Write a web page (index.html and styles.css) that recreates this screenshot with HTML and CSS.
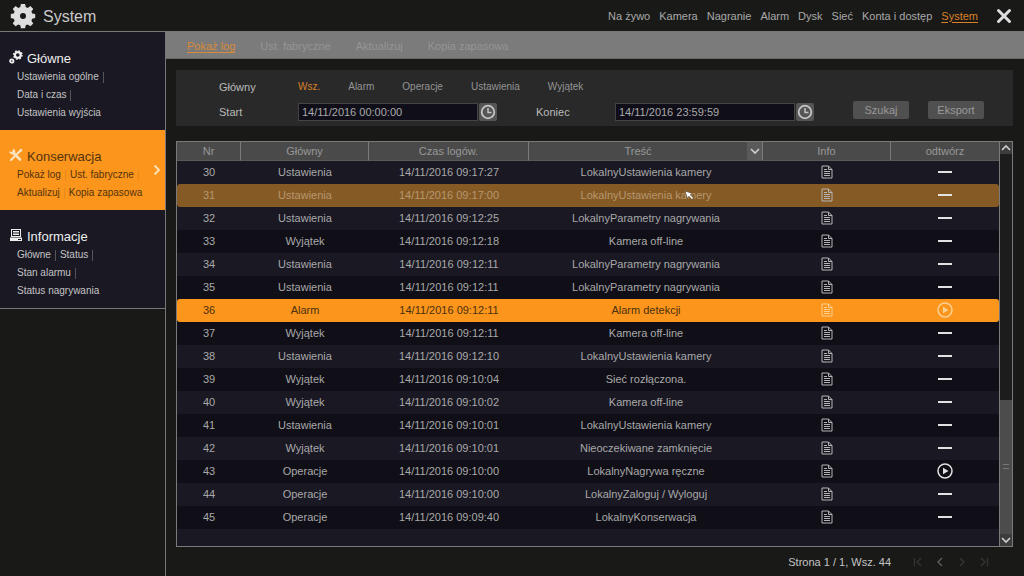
FILE: index.html
```html
<!DOCTYPE html>
<html lang="pl">
<head>
<meta charset="utf-8">
<title>System</title>
<link rel="stylesheet" href="styles.css">
</head>
<body>
<svg class="defs" aria-hidden="true">
  <symbol id="gear" viewBox="0 0 26 26">
    <path fill-rule="evenodd" d="M10.900 1h4.200l.6 3.100 2 .8L20.400 3l2.900 2.900-1.900 2.700.8 2 3 .5v4l-3 .6-.8 2 1.900 2.700-2.900 2.900-2.700-1.900-2 .8-.6 3h-4.200l-.6-3-2-.8-2.700 1.900-2.900-2.900 1.900-2.700-.8-2-3-.6v-4l3-.5.8-2-1.900-2.700L5.600 3l2.700 1.900 2-.8zM13 10a3 3 0 1 0 0 6 3 3 0 0 0 0-6z"/>
  </symbol>
  <symbol id="doc" viewBox="0 0 12 14">
    <path d="M1 1h6.500l3.500 3.500V13H1zM7.500 1v3.500H11M3 4.500h3M3 6.500h6M3 8.500h6M3 10.500h6" fill="none" stroke="currentColor"/>
  </symbol>
  <symbol id="dash" viewBox="0 0 16 16"><path d="M1 8h14" stroke="currentColor" stroke-width="2"/></symbol>
  <symbol id="play" viewBox="0 0 16 16">
    <circle cx="8" cy="8" r="7" fill="none" stroke="currentColor" stroke-width="1.500"/><path d="M6 4.700v6.600L11.500 8z" fill="currentColor"/>
  </symbol>
  <symbol id="clock" viewBox="0 0 18 18">
    <circle cx="9" cy="9" r="6.300" fill="none" stroke="currentColor" stroke-width="1.800"/><path d="M9 5v4.500h3.500" fill="none" stroke="currentColor" stroke-width="1.500"/>
  </symbol>
  <symbol id="down" viewBox="0 0 12 12"><path d="M2 4l4 4 4-4" fill="none" stroke="currentColor" stroke-width="1.700"/></symbol>
  <symbol id="up" viewBox="0 0 12 12"><path d="M2 8l4-4 4 4" fill="none" stroke="currentColor" stroke-width="1.700"/></symbol>
</svg>

<header class="topbar">
  <svg class="logo"><use href="#gear"/></svg>
  <h1>System</h1>
  <nav class="topnav">
    <a href="#">Na żywo</a><a href="#">Kamera</a><a href="#">Nagranie</a><a href="#">Alarm</a><a href="#">Dysk</a><a href="#">Sieć</a><a href="#">Konta i dostęp</a><a href="#" class="current">System</a>
  </nav>
  <button class="close" aria-label="Zamknij"><svg viewBox="0 0 16 16"><path d="M2.500 2.500l11 11M13.500 2.500l-11 11" stroke="currentColor" stroke-width="3" stroke-linecap="round"/></svg></button>
</header>

<div class="layout">
  <aside class="sidebar">
    <section class="group">
      <h2><svg viewBox="0 0 14 14"><circle cx="8.800" cy="5" r="2.900" fill="none" stroke="currentColor" stroke-width="2.200"/><circle cx="8.800" cy="5" r="4.200" fill="none" stroke="currentColor" stroke-width="1.400" stroke-dasharray="1.650 1.650"/><circle cx="2.800" cy="11" r="1.700" fill="none" stroke="currentColor" stroke-width="1.800"/></svg>Główne</h2>
      <p><a href="#">Ustawienia ogólne</a><i></i></p>
      <p><a href="#">Data i czas</a><i></i></p>
      <p><a href="#">Ustawienia wyjścia</a></p>
    </section>
    <section class="group active">
      <h2><svg viewBox="0 0 14 14"><path d="M4 4.500l7 7" fill="none" stroke="currentColor" stroke-width="2.600" stroke-linecap="round"/><path d="M2 12l9-9" fill="none" stroke="currentColor" stroke-width="2.200" stroke-linecap="round"/><path d="M0 3l2 1.200L4 3 3.600.800C6 1 7 3.500 6 5.500 4 7.500 0 6 0 3zM10 2l2.500-1.500L13.500 2 12 4.500z"/></svg>Konserwacja</h2>
      <p><a href="#">Pokaż log</a><i></i><a href="#">Ust. fabryczne</a><i></i></p>
      <p><a href="#">Aktualizuj</a><i></i><a href="#">Kopia zapasowa</a></p>
      <svg class="arrow" viewBox="0 0 8 12"><path d="M1.500 1.500L6 6l-4.500 4.500" fill="none" stroke="currentColor" stroke-width="1.800"/></svg>
    </section>
    <section class="group last">
      <h2><svg viewBox="0 0 14 14"><path fill-rule="evenodd" d="M2 1h10v8H2zM3 2v6h8V2zM1 9.500h12V13H1zM9 11v1h3v-1z"/><path d="M4 3.500h6M4 5h6M4 6.500h6" stroke="currentColor"/></svg>Informacje</h2>
      <p><a href="#">Główne</a><i></i><a href="#">Status</a><i></i></p>
      <p><a href="#">Stan alarmu</a><i></i></p>
      <p><a href="#">Status nagrywania</a></p>
    </section>
  </aside>

  <main class="content">
    <nav class="tabs"><a href="#" class="current">Pokaż log</a><a href="#">Ust. fabryczne</a><a href="#">Aktualizuj</a><a href="#">Kopia zapasowa</a></nav>

    <form class="filters">
      <div class="filter-row">
        <span class="label">Główny</span>
        <div class="kinds"><button type="button" class="on">Wsz.</button><button type="button">Alarm</button><button type="button">Operacje</button><button type="button">Ustawienia</button><button type="button">Wyjątek</button></div>
      </div>
      <div class="filter-row">
        <label class="label" for="start">Start</label>
        <div class="field"><input id="start" value="14/11/2016 00:00:00"><button type="button" aria-label="Wybierz start"><svg><use href="#clock"/></svg></button></div>
        <label class="label" for="end">Koniec</label>
        <div class="field"><input id="end" value="14/11/2016 23:59:59"><button type="button" aria-label="Wybierz koniec"><svg><use href="#clock"/></svg></button></div>
        <div class="actions"><button type="button">Szukaj</button><button type="button">Eksport</button></div>
      </div>
    </form>

    <div class="log">
      <table>
        <colgroup><col class="c-nr"><col class="c-kind"><col class="c-time"><col class="c-text"><col class="c-info"><col class="c-play"></colgroup>
        <thead><tr><th>Nr</th><th>Główny</th><th>Czas logów.</th><th><div class="sortable"><span>Treść</span><button aria-label="Filtruj treść"><svg><use href="#down"/></svg></button></div></th><th>Info</th><th>odtwórz</th></tr></thead>
        <tbody>
          <tr><td>30</td><td>Ustawienia</td><td>14/11/2016 09:17:27</td><td>LokalnyUstawienia kamery</td><td><svg class="doc"><use href="#doc"/></svg></td><td><svg class="act"><use href="#dash"/></svg></td></tr>
          <tr class="hover"><td>31</td><td>Ustawienia</td><td>14/11/2016 09:17:00</td><td><span class="pointed">LokalnyUstawienia kamery<svg class="cursor" viewBox="0 0 9 9"><path d="M0 0l7.500 2.500-2.300 1.300L8.500 7 7 8.500 3.800 5.200 2.500 7.500z" fill="#fff" stroke="#3a2a18" stroke-width=".5"/></svg></span></td><td><svg class="doc"><use href="#doc"/></svg></td><td><svg class="act"><use href="#dash"/></svg></td></tr>
          <tr><td>32</td><td>Ustawienia</td><td>14/11/2016 09:12:25</td><td>LokalnyParametry nagrywania</td><td><svg class="doc"><use href="#doc"/></svg></td><td><svg class="act"><use href="#dash"/></svg></td></tr>
          <tr><td>33</td><td>Wyjątek</td><td>14/11/2016 09:12:18</td><td>Kamera off-line</td><td><svg class="doc"><use href="#doc"/></svg></td><td><svg class="act"><use href="#dash"/></svg></td></tr>
          <tr><td>34</td><td>Ustawienia</td><td>14/11/2016 09:12:11</td><td>LokalnyParametry nagrywania</td><td><svg class="doc"><use href="#doc"/></svg></td><td><svg class="act"><use href="#dash"/></svg></td></tr>
          <tr><td>35</td><td>Ustawienia</td><td>14/11/2016 09:12:11</td><td>LokalnyParametry nagrywania</td><td><svg class="doc"><use href="#doc"/></svg></td><td><svg class="act"><use href="#dash"/></svg></td></tr>
          <tr class="selected"><td>36</td><td>Alarm</td><td>14/11/2016 09:12:11</td><td>Alarm detekcji</td><td><svg class="doc"><use href="#doc"/></svg></td><td><svg class="act"><use href="#play"/></svg></td></tr>
          <tr><td>37</td><td>Wyjątek</td><td>14/11/2016 09:12:11</td><td>Kamera off-line</td><td><svg class="doc"><use href="#doc"/></svg></td><td><svg class="act"><use href="#dash"/></svg></td></tr>
          <tr><td>38</td><td>Ustawienia</td><td>14/11/2016 09:12:10</td><td>LokalnyUstawienia kamery</td><td><svg class="doc"><use href="#doc"/></svg></td><td><svg class="act"><use href="#dash"/></svg></td></tr>
          <tr><td>39</td><td>Wyjątek</td><td>14/11/2016 09:10:04</td><td>Sieć rozłączona.</td><td><svg class="doc"><use href="#doc"/></svg></td><td><svg class="act"><use href="#dash"/></svg></td></tr>
          <tr><td>40</td><td>Wyjątek</td><td>14/11/2016 09:10:02</td><td>Kamera off-line</td><td><svg class="doc"><use href="#doc"/></svg></td><td><svg class="act"><use href="#dash"/></svg></td></tr>
          <tr><td>41</td><td>Ustawienia</td><td>14/11/2016 09:10:01</td><td>LokalnyUstawienia kamery</td><td><svg class="doc"><use href="#doc"/></svg></td><td><svg class="act"><use href="#dash"/></svg></td></tr>
          <tr><td>42</td><td>Wyjątek</td><td>14/11/2016 09:10:01</td><td>Nieoczekiwane zamknięcie</td><td><svg class="doc"><use href="#doc"/></svg></td><td><svg class="act"><use href="#dash"/></svg></td></tr>
          <tr><td>43</td><td>Operacje</td><td>14/11/2016 09:10:00</td><td>LokalnyNagrywa ręczne</td><td><svg class="doc"><use href="#doc"/></svg></td><td><svg class="act"><use href="#play"/></svg></td></tr>
          <tr><td>44</td><td>Operacje</td><td>14/11/2016 09:10:00</td><td>LokalnyZaloguj / Wyloguj</td><td><svg class="doc"><use href="#doc"/></svg></td><td><svg class="act"><use href="#dash"/></svg></td></tr>
          <tr><td>45</td><td>Operacje</td><td>14/11/2016 09:09:40</td><td>LokalnyKonserwacja</td><td><svg class="doc"><use href="#doc"/></svg></td><td><svg class="act"><use href="#dash"/></svg></td></tr>
        </tbody>
      </table>
      <div class="scroll">
        <button aria-label="Przewiń w górę"><svg><use href="#up"/></svg></button>
        <div class="track"></div>
        <div class="thumb"><span></span></div>
        <button aria-label="Przewiń w dół"><svg><use href="#down"/></svg></button>
      </div>
    </div>

    <footer class="pager">
      <span>Strona 1 / 1, Wsz. 44</span>
      <button aria-label="Pierwsza"><svg viewBox="0 0 10 10"><path d="M1.500 1v8M8 1L4 5l4 4"/></svg></button>
      <button class="lit" aria-label="Poprzednia"><svg viewBox="0 0 10 10"><path d="M7 1L3 5l4 4"/></svg></button>
      <button aria-label="Następna"><svg viewBox="0 0 10 10"><path d="M3 1l4 4-4 4"/></svg></button>
      <button aria-label="Ostatnia"><svg viewBox="0 0 10 10"><path d="M2 1l4 4-4 4M8.500 1v8"/></svg></button>
    </footer>
  </main>
</div>
</body>
</html>
```
FILE: styles.css
```css
* { box-sizing: border-box; }
body {
  margin: 0;
  min-height: 100vh;
  display: flex;
  flex-direction: column;
  background: #191918;
  color: #a9a9a9;
  font: 11px/18px "Liberation Sans", Arial, sans-serif;
}
h1, h2, p { margin: 0; font-weight: normal; }
a { color: inherit; text-decoration: none; }
button, input { font: inherit; color: inherit; border: 0; padding: 0; margin: 0; background: none; }
svg { display: block; fill: currentColor; }
.defs { position: absolute; width: 0; height: 0; }

.topbar {
  height: 32px;
  display: flex;
  align-items: center;
  padding: 0 12px 0 10px;
  border-bottom: 1px solid #777;
}
.logo { width: 26px; height: 26px; color: #dedede; }
.topbar h1 { flex: 1; margin-left: 7px; padding-top: 2px; font-size: 16px; color: #c9c9c9; }
.topnav { display: flex; gap: 9px; }
.current { color: #d98027; text-decoration: underline; text-underline-offset: 2px; }
.close { width: 16px; height: 16px; margin-left: 18px; color: #dedede; }

.layout { flex: 1; display: flex; }
.sidebar { width: 166px; flex: none; border-right: 1px solid #777; }
.group {
  position: relative;
  padding: 18px 8px 8px 17px;
  background: #191823;
  color: #c4c4c4;
  font-size: 10px;
  white-space: nowrap;
}
.group h2 { display: flex; align-items: center; gap: 4px; margin-left: -8px; font-size: 13px; color: #eee; }
.group h2 svg { width: 14px; height: 14px; margin-bottom: 4px; }
.group p { display: flex; align-items: center; }
.group i { width: 1px; height: 11px; margin: 0 4px; background: #55545c; }
.active { background: #fb951b; color: #53330f; }
.active h2 { color: #53330f; }
.active h2 svg, .arrow { color: #fbe3bd; }
.active i { background: #e58c20; }
.arrow { position: absolute; right: 4px; top: 34px; width: 8px; height: 12px; }
.last { border-bottom: 1px solid #777; }

.content { flex: 1; min-width: 0; display: flex; flex-direction: column; }
.tabs {
  display: flex;
  gap: 25px;
  height: 27px;
  padding: 5px 21px;
  background: #7b7b7b;
  color: #959595;
  border-bottom: 1px solid #666;
}
.tabs .current { color: #d98a38; }

.filters {
  margin: 11px 11px 0 10px;
  padding: 6px 29px 5px 43px;
  display: flex;
  flex-direction: column;
  gap: 5px;
  background: #292929;
}
.filter-row { display: flex; height: 20px; align-items: flex-end; }
.label { width: 79px; flex: none; color: #bababa; }
.kinds { display: flex; gap: 28px; font-size: 10px; color: #949494; }
.kinds .on { color: #d98027; }
.field { flex: 0 1 199px; min-width: 0; display: flex; gap: 1px; margin-right: 39px; }
.field input {
  flex: 1;
  min-width: 0;
  height: 18px;
  padding: 0 3px;
  background: #100f19;
  border: 1px solid #444;
}
.field button { width: 18px; height: 18px; border-radius: 2px; background: #555; color: #c4c4c4; }
.field svg { width: 18px; height: 18px; }
.actions { align-self: flex-start; display: flex; gap: 19px; }
.actions button { width: 56px; height: 18px; border-radius: 2px; background: #505050; color: #999; }

.log {
  flex: 1;
  display: flex;
  align-items: flex-start;
  margin: 15px 11px 0 10px;
  border: 1px solid #7a7a7a;
  background: #191823;
}
table { flex: 1; width: 100%; min-width: 0; table-layout: fixed; border-collapse: separate; border-spacing: 0; text-align: center; }
.c-nr { width: 64px; }
.c-kind { width: 128px; }
.c-time { width: 160px; }
.c-info { width: 128px; }
.c-play { width: 108px; }
th {
  height: 19px;
  padding: 0;
  font-weight: normal;
  color: #989898;
  background: #4a4a4a;
  border-right: 1px solid #7a7a7a;
  border-bottom: 1px solid #5a5a5a;
}
th:last-child { border-right: 0; }
.sortable { display: flex; }
.sortable span { flex: 1; }
.sortable button { width: 15px; background: #5a5a5a; color: #ccc; }
.sortable svg { width: 12px; height: 12px; margin: auto; }
td { height: 23px; padding: 0 0 1px; white-space: nowrap; }
tbody tr:nth-child(even) { background: #100f17; }
tbody tr.hover td { background: #865a25; color: #b59870; }
tbody tr.selected td { background: #fb951b; color: #4b3010; }
.hover td:first-child, .selected td:first-child { border-radius: 3px 0 0 3px; }
.hover td:last-child, .selected td:last-child { border-radius: 0 3px 3px 0; }
.doc { width: 12px; height: 14px; margin: auto; color: #b5b5b5; }
.act { width: 16px; height: 16px; margin: auto; color: #e2e2e2; }
.selected .doc, .selected .act { color: #fbd093; }
.pointed { position: relative; }
.cursor { position: absolute; right: 17px; top: 2px; width: 9px; height: 9px; }

.scroll {
  align-self: stretch;
  width: 13px;
  flex: none;
  display: flex;
  flex-direction: column;
  border-left: 1px solid #7a7a7a;
  background: #1c1c1c;
}
.scroll button { height: 12px; background: #3c3c3c; color: #ccc; }
.scroll svg { width: 12px; height: 12px; }
.track { flex: 245; }
.thumb { flex: 134; display: flex; align-items: center; justify-content: center; background: #4c4c4c; }
.thumb span { width: 6px; height: 5px; border: solid #777; border-width: 1px 0; }

.pager { height: 29px; display: flex; align-items: center; justify-content: flex-end; padding-right: 35px; color: #c4c4c4; }
.pager span { margin-right: 22px; }
.pager button { width: 10px; height: 10px; margin-right: 12px; color: #353535; }
.pager button:last-child { margin-right: 0; }
.pager .lit { color: #606060; }
.pager path { fill: none; stroke: currentColor; stroke-width: 1.3; }
```
